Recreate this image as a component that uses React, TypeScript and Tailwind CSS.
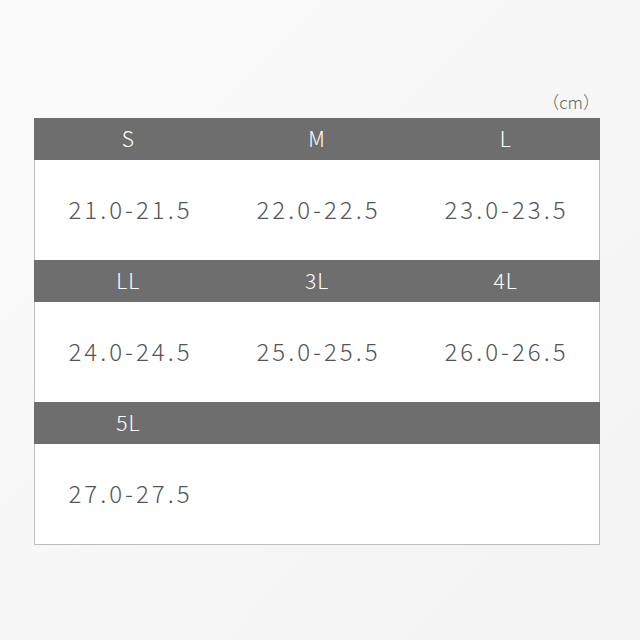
import React from "react";

const rows: { h: string[]; v: string[] }[] = [
  { h: ["S", "M", "L"], v: ["21.0-21.5", "22.0-22.5", "23.0-23.5"] },
  { h: ["LL", "3L", "4L"], v: ["24.0-24.5", "25.0-25.5", "26.0-26.5"] },
  { h: ["5L", "", ""], v: ["27.0-27.5", "", ""] },
];

export default function App() {
  return (
    <div
      className="w-[640px] h-[640px] bg-gradient-to-br from-[#fbfbfb] to-[#f3f3f3] pt-[90px]"
      style={{ fontFamily: '"Noto Sans CJK JP", "Noto Sans", sans-serif' }}
    >
      <div className="ml-[34px] w-[566px]">
        <div className="flex justify-end h-[28px] text-[17px] leading-[24px] text-[#666] font-light">
          （cm）
        </div>
        <div className="border-x border-b border-[#bdbdbd]">
          {rows.map((r, i) => (
            <div key={i}>
              <div className="grid grid-cols-3 h-[42px] bg-[#6f6e6e] -mx-px">
                {r.h.map((t, j) => (
                  <div
                    key={j}
                    className="flex items-center justify-center text-white text-[21px] font-light tracking-[1px]"
                  >
                    {t}
                  </div>
                ))}
              </div>
              <div className="grid grid-cols-3 h-[100px] bg-white">
                {r.v.map((t, j) => (
                  <div
                    key={j}
                    className="flex items-center justify-center text-[#555] text-[24px] font-light tracking-[3px] pb-[2px] pl-[3px]"
                  >
                    {t}
                  </div>
                ))}
              </div>
            </div>
          ))}
        </div>
      </div>
    </div>
  );
}
